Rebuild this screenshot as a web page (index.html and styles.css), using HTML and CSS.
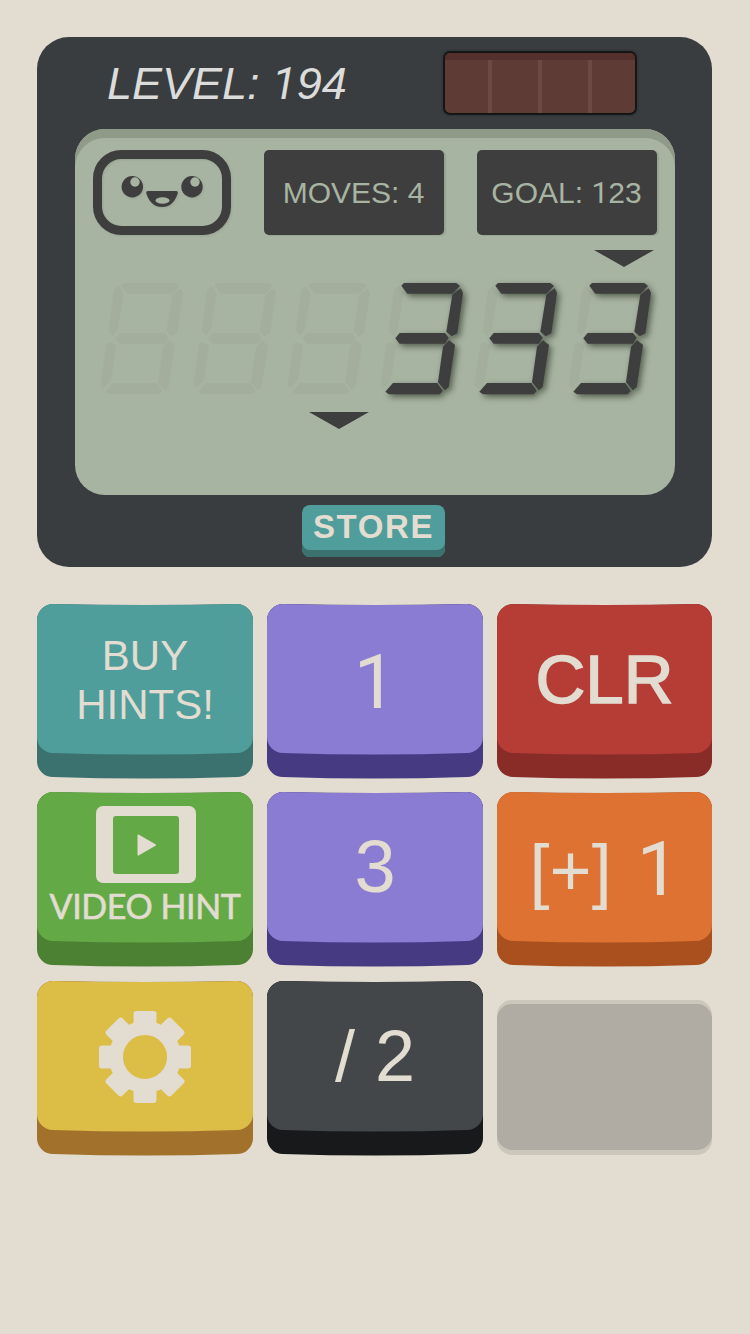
FILE: index.html
```html
<!DOCTYPE html>
<html lang="en">
<head>
<meta charset="utf-8">
<title>Calculator: The Game</title>
<link rel="stylesheet" href="styles.css">
</head>
<body>
<svg class="defs" width="0" height="0" aria-hidden="true">
  <defs>
    <g id="seg-a"><polygon points="97,62 105,54 262,54 273,63 250,86 115,86"/></g>
    <g id="seg-b"><polygon points="275,70 282,83 265,205 248,214 232,200 250,89"/></g>
    <g id="seg-c"><polygon points="240,226 258,240 239,366 228,376 207,352 222,245"/></g>
    <g id="seg-d"><polygon points="49,380 72,354 205,354 221,378 212,388 60,388"/></g>
    <g id="seg-e"><polygon points="60,230 82,242 66,345 43,370 34,360 52,240"/></g>
    <g id="seg-f"><polygon points="90,62 104,88 87,192 72,212 59,198 75,75"/></g>
    <g id="seg-g"><polygon points="79,220 92,204 228,204 239,218 228,236 92,236"/></g>
    <g id="ghost"><use href="#seg-a"/><use href="#seg-b"/><use href="#seg-c"/><use href="#seg-d"/><use href="#seg-e"/><use href="#seg-f"/><use href="#seg-g"/></g>
    <g id="three"><use href="#seg-a"/><use href="#seg-b"/><use href="#seg-c"/><use href="#seg-d"/><use href="#seg-g"/></g>
  </defs>
</svg>
<main class="page">
  <section class="panel">
    <header class="panel-head">
      <div class="level">LEVEL: <span class="one">1</span>94</div>
      <div class="solar">
        <span class="cell"></span><span class="cell"></span><span class="cell"></span><span class="cell"></span>
      </div>
    </header>
    <div class="screen">
      <div class="info-row">
        <svg class="face-icon" width="138" height="85" viewBox="0 0 138 85">
          <rect class="face-outline" x="4.5" y="4.5" width="129" height="76" rx="24"/>
          <circle class="face-dark" cx="39.3" cy="36.7" r="10.7"/>
          <circle class="face-light" cx="42" cy="32" r="4.7"/>
          <circle class="face-dark" cx="99" cy="36.7" r="10.7"/>
          <circle class="face-light" cx="102" cy="32" r="4.7"/>
          <path class="face-dark" d="M55 41H83Q85.500 41 84.500 44Q80 57 69 57Q58 57 53.500 44Q52.500 41 55 41Z"/>
          <ellipse class="face-light" cx="69.500" cy="50.500" rx="7" ry="3.300"/>
        </svg>
        <div class="readout readout-moves">MOVES: 4</div>
        <div class="readout"><span>GOAL: <span class="one">1</span>23</span></div>
      </div>
      <svg class="pointer pointer-goal" width="60" height="17" viewBox="0 0 60 17"><polygon points="0,0 60,0 30,17"/></svg>
      <div class="digits">
        <svg class="digit" viewBox="0 0 281 450"><g class="seg-ghost"><use href="#ghost"/></g></svg>
        <svg class="digit" viewBox="0 0 281 450"><g class="seg-ghost"><use href="#ghost"/></g></svg>
        <svg class="digit" viewBox="0 0 281 450"><g class="seg-ghost"><use href="#ghost"/></g></svg>
        <svg class="digit" viewBox="0 0 281 450"><g class="seg-ghost"><use href="#ghost"/></g><g class="seg-on"><use href="#three"/></g></svg>
        <svg class="digit" viewBox="0 0 281 450"><g class="seg-ghost"><use href="#ghost"/></g><g class="seg-on"><use href="#three"/></g></svg>
        <svg class="digit" viewBox="0 0 281 450"><g class="seg-ghost"><use href="#ghost"/></g><g class="seg-on"><use href="#three"/></g></svg>
      </div>
      <svg class="pointer pointer-digit" width="60" height="17" viewBox="0 0 60 17"><polygon points="0,0 60,0 30,17"/></svg>
    </div>
    <div class="store">STORE</div>
  </section>

  <section class="keys">
    <div class="key key-teal"><div class="key-face key-text hints">BUY<br>HINTS!</div></div>
    <div class="key key-purple"><div class="key-face key-text num num-one"><span class="one">1</span></div></div>
    <div class="key key-red key-narrow"><div class="key-face key-text clr">CLR</div></div>

    <div class="key key-green">
      <div class="key-face video">
        <svg class="video-icon" width="100" height="77" viewBox="0 0 100 77">
          <rect class="video-frame" width="100" height="77" rx="7"/>
          <rect class="video-screen" x="17" y="10" width="66" height="58" rx="3"/>
          <polygon class="video-play" points="42.500,29.500 59,39 42.500,48.500" />
        </svg>
        <div class="video-label">VIDEO HINT</div>
      </div>
    </div>
    <div class="key key-purple"><div class="key-face key-text num">3</div></div>
    <div class="key key-orange key-narrow"><div class="key-face key-text op"><span>[+] <span class="one op-one">1</span></span></div></div>

    <div class="key key-yellow">
      <div class="key-face gear-face">
        <svg class="gear" width="92" height="92" viewBox="-46 -46 92 92">
          <circle class="gear-ring" r="29"/>
          <rect class="gear-tooth" x="-11.500" y="-46" width="23" height="18" rx="3"/>
          <rect class="gear-tooth" x="-11.500" y="-46" width="23" height="18" rx="3" transform="rotate(45)"/>
          <rect class="gear-tooth" x="-11.500" y="-46" width="23" height="18" rx="3" transform="rotate(90)"/>
          <rect class="gear-tooth" x="-11.500" y="-46" width="23" height="18" rx="3" transform="rotate(135)"/>
          <rect class="gear-tooth" x="-11.500" y="-46" width="23" height="18" rx="3" transform="rotate(180)"/>
          <rect class="gear-tooth" x="-11.500" y="-46" width="23" height="18" rx="3" transform="rotate(225)"/>
          <rect class="gear-tooth" x="-11.500" y="-46" width="23" height="18" rx="3" transform="rotate(270)"/>
          <rect class="gear-tooth" x="-11.500" y="-46" width="23" height="18" rx="3" transform="rotate(315)"/>
        </svg>
      </div>
    </div>
    <div class="key key-dark"><div class="key-face key-text div">/ 2</div></div>
    <div class="key-blank"><div class="key-blank-face"></div></div>
  </section>
</main>
</body>
</html>
```
FILE: styles.css
```css
* { box-sizing: border-box; }
html, body { margin: 0; padding: 0; }
body {
  width: 750px;
  height: 1334px;
  overflow: hidden;
  background: #e2dcd1;
  font-family: "Liberation Sans", Arial, sans-serif;
}
.defs { position: absolute; }
.page { padding: 37px 38px 0 37px; }
.one { font-family: Roboto, "Liberation Sans", sans-serif; }

/* Top panel */
.panel {
  height: 530px;
  background: #393d40;
  border-radius: 32px;
  display: flex;
  flex-direction: column;
  align-items: center;
}
.panel-head {
  width: 100%;
  height: 92px;
  display: flex;
  align-items: flex-start;
}
.level {
  margin: 21px 0 0 70px;
  width: 336px;
  font-size: 45px;
  line-height: 52px;
  font-style: italic;
  color: #dcdcda;
  white-space: nowrap;
}
.solar {
  margin-top: 14px;
  width: 194px;
  height: 64px;
  display: flex;
  border: 2px solid #141616;
  border-radius: 7px;
  overflow: hidden;
  background: #5f3b35;
  box-shadow: 0 0 0 2px rgba(0, 0, 0, .08);
}
.cell {
  flex: 0 0 50px;
  border-top: 7px solid #53302b;
  background: linear-gradient(#6b4a43, #6b4a43) right / 4px 100% no-repeat;
}
.cell:first-child { flex-basis: 47px; }
.cell:last-child { flex-basis: 43px; background: none; }

.screen {
  position: relative;
  width: 600px;
  height: 366px;
  flex: none;
  background: #a8b4a2;
  border-radius: 30px;
  box-shadow: inset 0 9px 0 #8f9a89;
  padding: 21px 18px 0 14px;
}
.info-row {
  display: flex;
  margin-left: 4px;
  gap: 33px;
}
.face-icon { flex: none; filter: drop-shadow(1px 1px 1px #98a493); }
.face-outline { fill: none; stroke: #3e3e3e; stroke-width: 9; }
.face-dark { fill: #3e3e3e; }
.face-light { fill: #a8b4a2; }
.readout {
  width: 180px;
  height: 85px;
  background: #3e3e3e;
  border-radius: 5px;
  box-shadow: 2px 1px 1px #98a493;
  color: #a8b4a2;
  font-size: 30px;
  display: flex;
  align-items: center;
  justify-content: center;
}
.pointer { position: absolute; }
.pointer polygon { fill: #3e3e3e; }
.pointer-goal { left: 519px; top: 121px; }
.pointer-digit { left: 234px; top: 283px; }

.digits {
  display: flex;
  margin-top: 30px;
}
.digit {
  width: 93.67px;
  height: 150px;
  flex: none;
  overflow: visible;
}
.seg-ghost { fill: #3e3e3e; opacity: .04; filter: blur(2px); }
.seg-on {
  fill: #3e3e3e;
  filter: drop-shadow(8px 8px 10px rgba(45, 55, 40, .7));
}

.store {
  margin: 10px 2px 0 0;
  width: 143px;
  height: 52px;
  background: #4f9e9b;
  border-radius: 8px;
  box-shadow: inset 0 -7px 0 #3b726f;
  color: #e2dcd1;
  font-size: 33px;
  font-weight: 700;
  letter-spacing: 1.6px;
  line-height: 44px;
  text-align: center;
}

/* Keypad */
.keys {
  margin-top: 37px;
  display: grid;
  grid-template-columns: 216px 216px 215px;
  grid-template-rows: 174px 175px 175px;
  column-gap: 14px;
  row-gap: 14px;
}
.key {
  height: 175px;
  clip-path: path("M16 0Q108 2 200 0A16 16 0 0 1 216 16V158A16 16 0 0 1 200 173Q108 176 16 173A16 16 0 0 1 0 158V16A16 16 0 0 1 16 0Z");
}
.key-narrow {
  clip-path: path("M16 0Q108 2 199 0A16 16 0 0 1 215 16V158A16 16 0 0 1 199 173Q108 176 16 173A16 16 0 0 1 0 158V16A16 16 0 0 1 16 0Z");
}
.key-face {
  height: 152px;
  clip-path: path("M16 0Q108 2 200 0A16 16 0 0 1 216 16V133A16 16 0 0 1 200 149Q108 152 16 149A16 16 0 0 1 0 133V16A16 16 0 0 1 16 0Z");
}
.key-narrow .key-face {
  clip-path: path("M16 0Q108 2 199 0A16 16 0 0 1 215 16V133A16 16 0 0 1 199 149Q108 152 16 149A16 16 0 0 1 0 133V16A16 16 0 0 1 16 0Z");
}
.key-text {
  display: flex;
  align-items: center;
  justify-content: center;
  text-align: center;
  color: #e2dcd1;
  white-space: nowrap;
}
.hints { font-size: 42px; line-height: 49px; }
.num { font-size: 74px; padding-bottom: 3px; }
.num-one { font-size: 76px; padding: 3px 0 0; }
.clr { font-size: 69px; padding-bottom: 2px; -webkit-text-stroke: 1.5px #e2dcd1; }
.op { font-size: 72px; padding-top: 2px; word-spacing: 5px; }
.op-one { font-size: 76px; }
.div { font-size: 72px; padding-bottom: 3px; }

.key-teal { background: #3b726f; }
.key-teal .key-face { background: #4f9e9b; }
.key-purple { background: #463a82; }
.key-purple .key-face { background: #8a7cd2; }
.key-red { background: #892c28; }
.key-red .key-face { background: #b53d35; }
.key-green { background: #4c8134; }
.key-green .key-face { background: #63aa46; }
.key-orange { background: #a9501e; }
.key-orange .key-face { background: #de7232; }
.key-yellow { background: #a2722d; }
.key-yellow .key-face { background: #dcbd45; }
.key-dark { background: #17191b; }
.key-dark .key-face { background: #434749; }

.video {
  display: flex;
  flex-direction: column;
  align-items: center;
  padding: 14px 0 0 2px;
}
.video-icon { flex: none; }
.video-frame { fill: #e2dcd1; }
.video-screen { fill: #63aa46; }
.video-play { fill: #e2dcd1; stroke: #e2dcd1; stroke-width: 2; stroke-linejoin: round; }
.video-label {
  font-family: Lato, "Liberation Sans", sans-serif;
  font-size: 34px;
  line-height: 46px;
  letter-spacing: -.4px;
  margin-left: -2px;
  -webkit-text-stroke: .6px #e2dcd1;
  color: #e2dcd1;
  white-space: nowrap;
}

.gear-face {
  display: flex;
  justify-content: center;
  padding-top: 30px;
}
.gear { flex: none; }
.gear-ring { fill: none; stroke: #e2dcd1; stroke-width: 14; }
.gear-tooth { fill: #e2dcd1; }

.key-blank {
  margin-top: 19px;
  height: 155px;
  background: #cbc7ba;
  border-radius: 15px;
  padding-top: 4px;
}
.key-blank-face {
  height: 146px;
  background: #b0aca4;
  border-radius: 15px;
}
```
